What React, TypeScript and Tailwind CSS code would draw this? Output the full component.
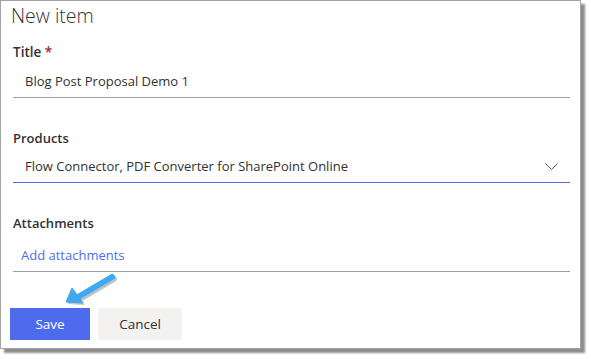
const font = { fontFamily: '"Open Sans", "Noto Sans", sans-serif' }

function Chevron() {
  return (
    <svg width="13" height="7" viewBox="0 0 13 7" className="text-[#605e5c]">
      <path d="M0.5 0.5 L6.5 6.5 L12.5 0.5" fill="none" stroke="currentColor" strokeWidth="1" />
    </svg>
  )
}

function Arrow() {
  return (
    <svg width="70" height="50" viewBox="0 0 70 50" className="absolute left-[58px] top-[268px]">
      <g transform="translate(2 2)" opacity="0.35">
        <path d="M54 9 L20 29" stroke="#555" strokeWidth="6" strokeLinecap="round" fill="none" />
        <path d="M8 34 L14 20 L25 35 Z" fill="#555" />
      </g>
      <path d="M54 9 L20 29" stroke="#3ea8f0" strokeWidth="6" strokeLinecap="round" fill="none" />
      <path d="M8 34 L14 20 L25 35 Z" fill="#3ea8f0" stroke="#3ea8f0" strokeLinejoin="round" />
    </svg>
  )
}

export default function App() {
  return (
    <div className="w-[591px] h-[359px] bg-white relative" style={font}>
      <div className="w-[581px] h-[349px] border border-[#a3a3a3] bg-white shadow-[4px_4px_2px_rgba(0,0,0,0.45)] pl-[12px] pr-[10px]">
        <h1 className="text-[19.5px] leading-[28px] font-light text-[#333] -ml-[2px] mt-[1px]">New item</h1>

        {/* Title */}
        <div className="mt-[12px]">
          <label className="block text-[13.5px] leading-[20px] font-semibold text-[#323130]">
            Title <span className="text-[#a4262c]">*</span>
          </label>
          <div className="mt-[4px] h-[32px] border-b border-[#a19f9d] flex items-center px-[12px] text-[13px] text-[#323130]">
            Blog Post Proposal Demo 1
          </div>
        </div>

        {/* Products */}
        <div className="mt-[30px]">
          <label className="block text-[13px] leading-[20px] font-semibold text-[#323130]">Products</label>
          <div className="mt-[3px] h-[32px] border-b border-[#4f6bed] flex items-center justify-between pl-[12px] pr-[12px] text-[13px] text-[#323130]">
            <span>Flow Connector, PDF Converter for SharePoint Online</span>
            <Chevron />
          </div>
        </div>

        {/* Attachments */}
        <div className="mt-[30px]">
          <label className="block text-[13px] leading-[20px] font-semibold text-[#323130]">Attachments</label>
          <div className="mt-[7px] h-[32px] border-b border-[#a19f9d] flex items-center px-[8px] text-[13px] text-[#4f6bed]">
            Add attachments
          </div>
        </div>

        <div className="mt-[36px] -ml-[3px] flex gap-[8px]">
          <button className="w-[80px] h-[32px] bg-[#4f6bed] text-white text-[13.5px] font-medium">Save</button>
          <button className="w-[84px] h-[32px] bg-[#f3f2f1] text-[#323130] text-[13.5px] font-medium">Cancel</button>
        </div>
      </div>
      <Arrow />
    </div>
  )
}
